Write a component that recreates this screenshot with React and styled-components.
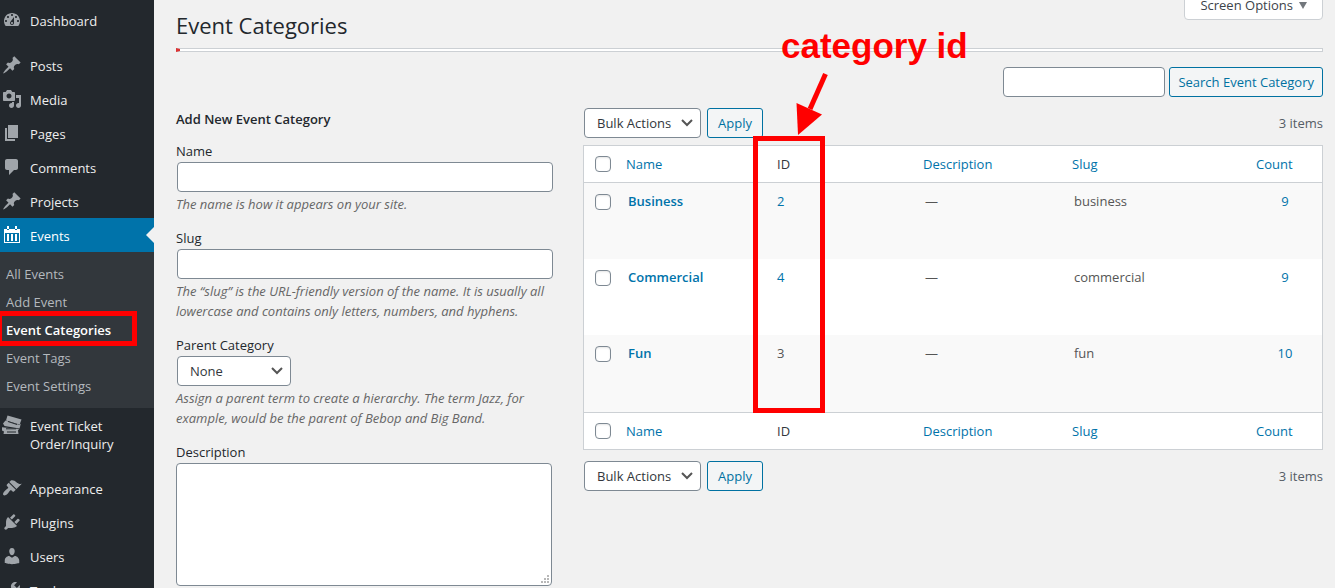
import React from "react";
import styled, { createGlobalStyle, css } from "styled-components";

const GlobalStyle = createGlobalStyle`
  *, *::before, *::after { box-sizing: border-box; }
  body {
    margin: 0;
    background: #f1f1f1;
    color: #3c434a;
    font-family: "Open Sans", "Noto Sans", sans-serif;
    font-size: 13px;
    line-height: 20px;
  }
  input, select, textarea, button { font: inherit; margin: 0; }
  a { color: #0073aa; text-decoration: none; }
  h1, h2, p, ul { margin: 0; padding: 0; }
  ul { list-style: none; }
`;

const Shell = styled.div`
  display: flex;
  height: 100vh;
  overflow: hidden;
`;

/* ---------- side menu ---------- */

const Sidebar = styled.nav`
  flex: 0 0 154px;
  padding-top: 3px;
  background: #23282d;
`;

const MenuGroup = styled.ul`
  margin-bottom: 11px;
`;

const MenuLink = styled.a`
  position: relative;
  display: flex;
  gap: 8px;
  min-height: 34px;
  padding: 9px 8px 7px 2px;
  color: #eee;
  font-size: 13px;
  line-height: 18px;
  background: ${(p) => (p.$current ? "#0073aa" : "transparent")};
  ${(p) =>
    p.$current &&
    css`
      color: #fff;
      &::after {
        content: "";
        position: absolute;
        right: 0;
        top: 9px;
        border: 8px solid transparent;
        border-right-color: #f1f1f1;
        border-left-width: 0;
      }
    `}
`;

const MenuIcon = styled.svg`
  flex: 0 0 20px;
  width: 20px;
  height: 20px;
  margin-top: -2px;
  fill: ${(p) => (p.$current ? "#fff" : "#a0a5aa")};
`;

const SubMenu = styled.ul`
  padding: 8px 0;
  background: #32373c;
`;

const SubLink = styled.a`
  position: relative;
  display: block;
  padding: 4px 6px;
  color: ${(p) => (p.$current ? "#fff" : "#b4b9be")};
  font-weight: ${(p) => (p.$current ? 600 : 400)};
`;

const SubHighlight = styled.span`
  position: absolute;
  inset: -5px 17px -2px -3px;
  border: 5px solid #f00;
`;

const ICONS = {
  dashboard:
    "M3.76 16h12.48c1.1-1.37 1.76-3.11 1.76-5 0-4.42-3.58-8-8-8s-8 3.58-8 8c0 1.89.66 3.63 1.76 5zM10 4c.55 0 1 .45 1 1s-.45 1-1 1-1-.45-1-1 .45-1 1-1zM6 6c.55 0 1 .45 1 1s-.45 1-1 1-1-.45-1-1 .45-1 1-1zm8 0c.55 0 1 .45 1 1s-.45 1-1 1-1-.45-1-1 .45-1 1-1zm-5.37 5.55L12 7v6c0 1.1-.9 2-2 2s-2-.9-2-2c0-.57.24-1.08.63-1.45zM4 10c.55 0 1 .45 1 1s-.45 1-1 1-1-.45-1-1 .45-1 1-1zm12 0c.55 0 1 .45 1 1s-.45 1-1 1-1-.45-1-1 .45-1 1-1zm-5 3c0-.55-.45-1-1-1s-1 .45-1 1 .45 1 1 1 1-.45 1-1z",
  pin: "M10.44 3.02l1.82-1.82 6.36 6.35-1.83 1.82c-1.05-.68-2.48-.57-3.41.36l-.75.75c-.92.93-1.04 2.35-.35 3.41l-1.83 1.82-2.41-2.41-2.8 2.79c-.42.42-3.38 2.71-3.8 2.29s1.86-3.39 2.28-3.81l2.79-2.79L4.1 9.36l1.83-1.82c1.05.69 2.48.57 3.4-.36l.75-.75c.93-.92 1.05-2.35.36-3.41z",
  media:
    "M13 11V4c0-.55-.45-1-1-1h-1.67L9 1H5L3.67 3H2c-.55 0-1 .45-1 1v7c0 .55.45 1 1 1h10c.55 0 1-.45 1-1zM7 4.5c1.38 0 2.5 1.12 2.5 2.5S8.38 9.5 7 9.5 4.5 8.38 4.5 7 5.62 4.5 7 4.5zM14 6h5v10.5c0 1.38-1.12 2.5-2.5 2.5S14 17.88 14 16.5s1.12-2.5 2.5-2.5c.17 0 .34.02.5.05V9h-3V6zm-4 8.05V13h2v3.5c0 1.38-1.12 2.5-2.5 2.5S7 17.88 7 16.5 8.12 14 9.5 14c.17 0 .34.02.5.05z",
  page: "M6 15V2h10v13H6zm-1 1h8v2H3V5h2v11z",
  comment:
    "M5 2h9c1.1 0 2 .9 2 2v7c0 1.1-.9 2-2 2h-2l-5 5v-5H5c-1.1 0-2-.9-2-2V4c0-1.1.9-2 2-2z",
  brush:
    "M14.48 11.06L7.41 3.99l1.5-1.5c.5-.56 2.3-.47 3.51.32 1.21.8 1.43 1.28 2.91 2.1 1.18.64 2.45 1.26 4.45.85zm-.71.71L6.7 4.7 4.93 6.47c-.39.39-.39 1.02 0 1.41l1.06 1.06c.39.39.39 1.03 0 1.42-.6.6-1.43 1.11-2.21 1.69-.35.26-.7.53-1.01.84C1.43 14.23.4 16.08 1.4 17.07c.99 1 2.84-.03 4.18-1.36.31-.31.58-.66.85-1.02.57-.78 1.08-1.61 1.69-2.21.39-.39 1.02-.39 1.41 0l1.06 1.06c.39.39 1.02.39 1.41 0z",
  plug: "M13.11 4.36L9.87 7.6 8 5.73l3.24-3.24c.35-.34 1.05-.2 1.56.32.52.51.66 1.21.31 1.55zm-8 1.77l.91-1.12 9.01 9.01-1.19.84c-.71.71-2.63 1.16-3.82 1.16H6.14L4.9 17.26c-.59.59-1.54.59-2.12 0-.59-.58-.59-1.53 0-2.12l1.24-1.24v-3.88c0-1.13.4-3.19 1.09-3.89zm7.26 3.97l3.24-3.24c.34-.35 1.04-.21 1.55.31.52.51.66 1.21.31 1.55l-3.24 3.25z",
  user: "M10 9.25c-2.27 0-2.73-3.44-2.73-3.44C7 4.02 7.82 2 9.97 2c2.16 0 2.98 2.02 2.71 3.81 0 0-.41 3.44-2.68 3.44zm0 2.57L12.72 10c2.39 0 4.52 2.33 4.52 4.53v2.49s-3.65 1.13-7.24 1.13c-3.65 0-7.24-1.13-7.24-1.13v-2.49c0-2.25 1.94-4.48 4.47-4.48z",
  wrench:
    "M16.68 9.77c-1.34 1.34-3.3 1.67-4.95.99l-5.41 6.52c-.99.99-2.59.99-3.58 0s-.99-2.59 0-3.57l6.52-5.42c-.68-1.65-.35-3.61.99-4.95 1.28-1.28 3.12-1.62 4.72-1.06l-2.89 2.89 2.82 2.82 2.86-2.87c.53 1.58.18 3.39-1.08 4.65z",
};

function CalendarIcon() {
  return (
    <MenuIcon viewBox="0 0 20 20" $current aria-hidden="true">
      <path
        fillRule="evenodd"
        d="M2 4h3v1h2V4h6v1h2V4h3v14H2zM3 8v9h14V8z"
      />
      <path d="M5 1h2v3H5zM13 1h2v3h-2zM5 9h2v7H5zM9 9h2v7H9zM13 9h2v7h-2z" />
    </MenuIcon>
  );
}

function TicketIcon() {
  return (
    <MenuIcon viewBox="0 0 20 20" aria-hidden="true">
      <path d="M5.5.5L19.5 4.5 18 8.500 19 10 4 5.500z" />
      <path d="M1 8.500L3.500 5.500 18.500 10.200 17.500 13.500 2.500 11z" />
      <path d="M0 12.200L17 14 16 15.500 16.500 19H1.500L2 16.500 0 15.500z" />
      <path d="M6 6.500l9 3M4 13.800h10M5 17h9" stroke="#23282d" fill="none" />
    </MenuIcon>
  );
}

function MenuItem({ icon, children, current }) {
  const glyph =
    icon === "calendar" ? (
      <CalendarIcon />
    ) : icon === "ticket" ? (
      <TicketIcon />
    ) : (
      <MenuIcon viewBox="0 0 20 20" aria-hidden="true">
        <path d={ICONS[icon]} />
      </MenuIcon>
    );
  return (
    <MenuLink href="#" $current={current}>
      {glyph}
      <span>{children}</span>
    </MenuLink>
  );
}

const EVENT_PAGES = [
  "All Events",
  "Add Event",
  "Event Categories",
  "Event Tags",
  "Event Settings",
];

function SideMenu() {
  return (
    <Sidebar aria-label="Main menu">
      <MenuGroup>
        <li><MenuItem icon="dashboard">Dashboard</MenuItem></li>
      </MenuGroup>
      <MenuGroup>
        <li><MenuItem icon="pin">Posts</MenuItem></li>
        <li><MenuItem icon="media">Media</MenuItem></li>
        <li><MenuItem icon="page">Pages</MenuItem></li>
        <li><MenuItem icon="comment">Comments</MenuItem></li>
        <li><MenuItem icon="pin">Projects</MenuItem></li>
        <li>
          <MenuItem icon="calendar" current>Events</MenuItem>
          <SubMenu>
            {EVENT_PAGES.map((name) => {
              const current = name === "Event Categories";
              return (
                <li key={name}>
                  <SubLink href="#" $current={current}>
                    {name}
                    {current && <SubHighlight />}
                  </SubLink>
                </li>
              );
            })}
          </SubMenu>
        </li>
        <li><MenuItem icon="ticket">Event Ticket Order/Inquiry</MenuItem></li>
      </MenuGroup>
      <MenuGroup>
        <li><MenuItem icon="brush">Appearance</MenuItem></li>
        <li><MenuItem icon="plug">Plugins</MenuItem></li>
        <li><MenuItem icon="user">Users</MenuItem></li>
        <li><MenuItem icon="wrench">Tools</MenuItem></li>
      </MenuGroup>
    </Sidebar>
  );
}

/* ---------- shared controls ---------- */

const controlBox = css`
  border: 1px solid #7e8993;
  border-radius: 4px;
  background: #fff;
  color: #32373c;
`;

const TextInput = styled.input`
  ${controlBox}
  display: block;
  width: ${(p) => p.$width || "100%"};
  height: 30px;
  padding: 0 8px;
`;

const TextAreaBox = styled.div`
  position: relative;
  padding-right: 1px;
`;

const TextArea = styled.textarea`
  ${controlBox}
  display: block;
  width: 100%;
  height: 123px;
  padding: 2px 6px;
  resize: none;
`;

const ResizeGrip = styled.svg`
  position: absolute;
  right: 4px;
  bottom: 3px;
  width: 8px;
  height: 8px;
  fill: #b8b8b8;
  pointer-events: none;
`;

const SelectBox = styled.span`
  position: relative;
  display: block;
  width: ${(p) => p.$width};
`;

const NativeSelect = styled.select`
  ${controlBox}
  display: block;
  appearance: none;
  width: 100%;
  height: 30px;
  padding: 0 24px 0 12px;
`;

const Chevron = styled.svg`
  position: absolute;
  right: 8px;
  top: 10px;
  width: 12px;
  height: 10px;
  fill: none;
  stroke: #555;
  stroke-width: 2;
  pointer-events: none;
`;

function Select({ id, label, width, option }) {
  return (
    <SelectBox $width={width}>
      <NativeSelect id={id} aria-label={label}>
        <option>{option}</option>
      </NativeSelect>
      <Chevron viewBox="0 0 12 10" aria-hidden="true">
        <path d="M1 2l5 5 5-5" />
      </Chevron>
    </SelectBox>
  );
}

const Button = styled.button`
  height: 30px;
  padding: 0 ${(p) => (p.$compact ? "8px" : "10px")};
  border: 1px solid #0071a1;
  border-radius: 3px;
  background: #f3f5f6;
  color: #0071a1;
  white-space: nowrap;
`;

const Checkbox = styled.input`
  appearance: none;
  display: block;
  width: 16px;
  height: 16px;
  border: 1px solid #7e8993;
  border-radius: 4px;
  background: #fff;
  box-shadow: inset 0 1px 2px rgba(0, 0, 0, 0.1);
`;

/* ---------- page ---------- */

const Main = styled.main`
  flex: 1;
  min-width: 0;
  padding: 0 12px 0 22px;
`;

const PageHeader = styled.header`
  display: flex;
  justify-content: space-between;
  align-items: flex-start;
  height: 48px;
`;

const Title = styled.h1`
  padding-top: 9px;
  color: #23282d;
  font-size: 22px;
  font-weight: 400;
  line-height: 32px;
`;

const ScreenOptions = styled.button`
  display: flex;
  align-items: center;
  gap: 6px;
  height: 28px;
  margin-top: -8px;
  padding: 0 15px 2px;
  border: 1px solid #ccd0d4;
  border-radius: 0 0 4px 4px;
  background: #fff;
  color: #3c434a;
`;

const Caret = styled.span`
  border: 4px solid transparent;
  border-top: 7px solid #72777c;
  border-bottom-width: 0;
`;

const ProgressTrack = styled.div`
  height: 4px;
  border: 1px solid #ccd0d4;
  border-left: 4px solid #dc3232;
  background: #fff;
`;

const SearchRow = styled.form`
  display: flex;
  justify-content: flex-end;
  gap: 4px;
  margin: 15px 0 11px;
`;

const Columns = styled.div`
  display: grid;
  grid-template-columns: minmax(0, 377fr) minmax(0, 740fr);
  gap: 30px;
`;

const AddForm = styled.form`
  display: flex;
  flex-direction: column;
  gap: 14px;
`;

const FormTitle = styled.h2`
  padding: 1px 0 0;
  margin-bottom: -2px;
  color: #23282d;
  font-size: 13px;
  font-weight: 600;
  line-height: 20px;
`;

const Field = styled.div``;

const Label = styled.label`
  display: block;
  color: #23282d;
  line-height: 21px;
`;

const FieldControl = styled.div`
  padding-left: 1px;
`;

const Hint = styled.p`
  margin-top: 2px;
  color: #666;
  font-style: italic;
`;

const TableNav = styled.div`
  display: flex;
  align-items: center;
  gap: 6px;
  padding-left: 1px;
`;

const ItemCount = styled.span`
  margin-left: auto;
  color: #555d66;
`;

const TableArea = styled.div`
  position: relative;
  margin: 7px 0 11px;
`;

const Table = styled.table`
  width: 100%;
  table-layout: fixed;
  border: 1px solid #ccd0d4;
  border-collapse: separate;
  border-spacing: 0;
  background: #fff;
`;

const HeadCell = styled.th`
  width: ${(p) => p.$width || "auto"};
  height: 37px;
  padding: 0 8px;
  border: 0 solid #ccd0d4;
  border-width: ${(p) => (p.$foot ? "1px 0 0" : "0 0 1px")};
  color: #32373c;
  font-size: 13px;
  font-weight: 400;
  text-align: left;
`;

const CheckCell = styled(HeadCell)`
  padding: 0 11px;
`;

const Row = styled.tr`
  background: ${(p) => (p.$striped ? "#f9f9f9" : "#fff")};
`;

const Cell = styled.td`
  height: 76px;
  padding: ${(p) => (p.$tight ? "8px" : "8px 10px")};
  color: #555;
  text-align: ${(p) => (p.$center ? "center" : "left")};
  vertical-align: top;

  tr:last-child > & {
    height: 77px;
  }
`;

const RowCheckCell = styled(Cell)`
  padding: 11px;
`;

const NameLink = styled.a`
  font-weight: 600;
`;

/* ---------- red annotations over the table ---------- */

const ColumnHighlight = styled.div`
  position: absolute;
  left: 170px;
  top: -9px;
  width: 72px;
  height: 277px;
  border: 5px solid #f00;
  pointer-events: none;
`;

const CalloutText = styled.div`
  position: absolute;
  left: 198px;
  top: -119px;
  color: #f00;
  font-family: "Liberation Sans", Arial, sans-serif;
  font-size: 35px;
  font-weight: 700;
  line-height: 40px;
  white-space: nowrap;
`;

const CalloutArrow = styled.svg`
  position: absolute;
  left: 212px;
  top: -74px;
  width: 36px;
  height: 66px;
`;

const HEADINGS = [
  { text: "Name", width: "151px", link: true },
  { text: "ID", width: "146px" },
  { text: "Description", width: "149px", link: true },
  { text: "Slug", link: true },
  { text: "Count", width: "74px", link: true },
];

const CATEGORIES = [
  { name: "Business", id: 2, idLink: true, slug: "business", count: 9 },
  { name: "Commercial", id: 4, idLink: true, slug: "commercial", count: 9 },
  { name: "Fun", id: 3, slug: "fun", count: 10 },
];

function HeadingRow({ foot }) {
  return (
    <tr>
      <CheckCell $foot={foot} $width="34px">
        <Checkbox type="checkbox" aria-label="Select all" />
      </CheckCell>
      {HEADINGS.map((h) => (
        <HeadCell key={h.text} $foot={foot} $width={h.width} scope="col">
          {h.link ? <a href="#">{h.text}</a> : h.text}
        </HeadCell>
      ))}
    </tr>
  );
}

function BulkBar() {
  return (
    <TableNav>
      <Select label="Bulk action" width="117px" option="Bulk Actions" />
      <Button type="button">Apply</Button>
      <ItemCount>3 items</ItemCount>
    </TableNav>
  );
}

function CategoryTable() {
  return (
    <section>
      <BulkBar />
      <TableArea>
        <Table>
          <thead>
            <HeadingRow />
          </thead>
          <tbody>
            {CATEGORIES.map((c, i) => (
              <Row key={c.name} $striped={i % 2 === 0}>
                <RowCheckCell>
                  <Checkbox type="checkbox" aria-label={`Select ${c.name}`} />
                </RowCheckCell>
                <Cell><NameLink href="#">{c.name}</NameLink></Cell>
                <Cell $tight>{c.idLink ? <a href="#">{c.id}</a> : c.id}</Cell>
                <Cell>—</Cell>
                <Cell>{c.slug}</Cell>
                <Cell $center><a href="#">{c.count}</a></Cell>
              </Row>
            ))}
          </tbody>
          <tfoot>
            <HeadingRow foot />
          </tfoot>
        </Table>
        <ColumnHighlight />
        <CalloutText>category id</CalloutText>
        <CalloutArrow viewBox="0 0 36 66" aria-hidden="true">
          <path d="M30.5 3L15 38" stroke="#f00" strokeWidth="5" />
          <path d="M1.5 32L27 43.5 3 64z" fill="#f00" />
        </CalloutArrow>
      </TableArea>
      <BulkBar />
    </section>
  );
}

function CategoryForm() {
  return (
    <AddForm>
      <FormTitle>Add New Event Category</FormTitle>
      <Field>
        <Label htmlFor="name">Name</Label>
        <FieldControl><TextInput id="name" type="text" /></FieldControl>
        <Hint>The name is how it appears on your site.</Hint>
      </Field>
      <Field>
        <Label htmlFor="slug">Slug</Label>
        <FieldControl><TextInput id="slug" type="text" /></FieldControl>
        <Hint>
          The “slug” is the URL-friendly version of the name. It is usually all
          lowercase and contains only letters, numbers, and hyphens.
        </Hint>
      </Field>
      <Field>
        <Label htmlFor="parent">Parent Category</Label>
        <FieldControl><Select id="parent" width="114px" option="None" /></FieldControl>
        <Hint>
          Assign a parent term to create a hierarchy. The term Jazz, for
          example, would be the parent of Bebop and Big Band.
        </Hint>
      </Field>
      <Field>
        <Label htmlFor="description">Description</Label>
        <TextAreaBox>
          <TextArea id="description" />
          <ResizeGrip viewBox="0 0 8 8" aria-hidden="true">
            <path d="M6 0h2v2H6zM3 3h2v2H3zM6 3h2v2H6zM0 6h2v2H0zM3 6h2v2H3zM6 6h2v2H6z" />
          </ResizeGrip>
        </TextAreaBox>
      </Field>
    </AddForm>
  );
}

export default function App() {
  return (
    <>
      <GlobalStyle />
      <Shell>
        <SideMenu />
        <Main>
          <PageHeader>
            <Title>Event Categories</Title>
            <ScreenOptions type="button">
              Screen Options <Caret />
            </ScreenOptions>
          </PageHeader>
          <ProgressTrack />
          <SearchRow role="search">
            <TextInput type="search" aria-label="Search" $width="162px" />
            <Button type="button" $compact>Search Event Category</Button>
          </SearchRow>
          <Columns>
            <CategoryForm />
            <CategoryTable />
          </Columns>
        </Main>
      </Shell>
    </>
  );
}
